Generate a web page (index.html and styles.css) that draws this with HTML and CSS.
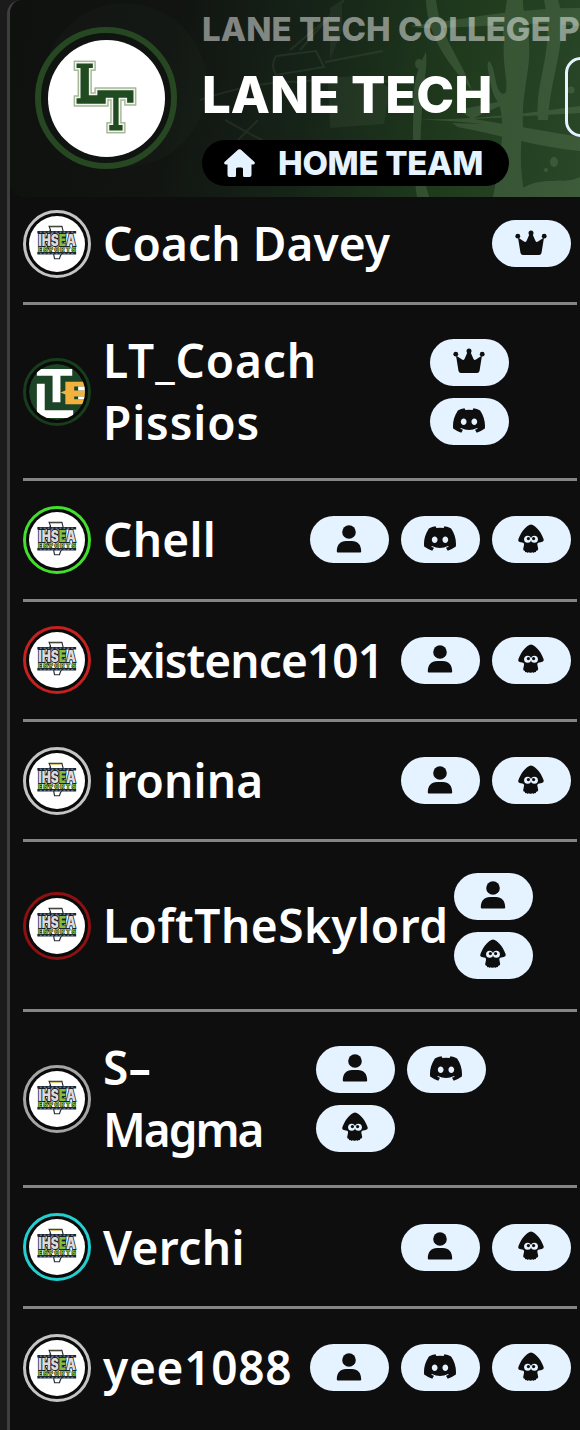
FILE: index.html
```html
<!DOCTYPE html>
<html lang="en">
<head>
<meta charset="utf-8">
<meta name="viewport" content="width=device-width">
<title>Lane Tech roster</title>
<link rel="stylesheet" href="styles.css">
</head>
<body>
<svg class="defs" aria-hidden="true">
  <symbol id="crown" viewBox="0 0 32 26"><path d="M5.500 23 3 7.500 9 11.500 Q10.500 12.500 11.500 11L15 3h2l3.500 8q1 1.500 2.500.5L29 7.500 26.500 23q-.5 2-2.500 2H8q-2 0-2.500-2z"/><circle cx="16" cy="3" r="2.500"/><circle cx="2.800" cy="6.200" r="2.400"/><circle cx="29.200" cy="6.200" r="2.400"/></symbol>
  <symbol id="user" viewBox="0 0 26 28"><circle cx="13" cy="7" r="6.800"/><path d="M.8 26.500C.8 19.500 4.500 16 10 16h6c5.500 0 9.200 3.500 9.200 10.500q0 1-1 1H1.800q-1 0-1-1z"/></symbol>
  <symbol id="discord" viewBox="0 0 127.140 96.360"><path d="M107.700 8.070A105.150 105.150 0 0 0 81.470 0a72.060 72.060 0 0 0-3.360 6.830 97.680 97.680 0 0 0-29.110 0A72.370 72.370 0 0 0 45.640 0a105.890 105.890 0 0 0-26.250 8.090C2.790 32.650-1.710 56.600.54 80.210a105.730 105.730 0 0 0 32.170 16.150 77.700 77.700 0 0 0 6.890-11.110 68.420 68.420 0 0 1-10.850-5.180c.91-.66 1.800-1.340 2.660-2a75.570 75.570 0 0 0 64.320 0c.87.71 1.760 1.390 2.660 2a68.680 68.680 0 0 1-10.870 5.190 77 77 0 0 0 6.890 11.100 105.250 105.250 0 0 0 32.190-16.140c2.640-27.380-4.510-51.110-18.900-72.150zM42.450 65.690C36.180 65.690 31 60 31 53s5-12.740 11.430-12.740S54 46 53.890 53s-5.050 12.690-11.440 12.690zm42.240 0C78.410 65.690 73.250 60 73.250 53s5-12.740 11.440-12.740S96.230 46 96.120 53s-5.040 12.690-11.430 12.690z"/></symbol>
  <symbol id="squid" viewBox="0 0 26 30"><path d="M13 .5C11 .8 7.500 3 5 6.500 2.500 10 .8 13.500.2 16q-.2 1.500 1.500 2l3.500.8q1.300.7.800 2.200L5.200 25q-.2 2 1.600 1.700.2 2.300 2 1.300.8 1.700 2 0 1.700 1.700 3.400 0 1.200 1.700 2 0 1.800 1 2-1.300 1.800.3 2-1.700l-.8-4q-.5-1.500.8-2.200l3.500-.8q2-.5 2.100-2C25.200 13.500 23.500 10 21 6.500 18.500 3 15 .8 13 .5z"/><g fill="#e5f2ff"><circle cx="9.600" cy="15.200" r="3.500"/><circle cx="16.400" cy="15.200" r="3.500"/></g><circle cx="10.400" cy="14.600" r="1.600"/><circle cx="15.600" cy="14.600" r="1.600"/></symbol>
  <symbol id="ihsea" viewBox="0 0 57 57">
    <path d="M20.500 10.500h13l1.500 6v19l-3 5-1 3h-5l-1-5-5-5-4-8 4-9 2-2z" fill="#fff" stroke="#242d35" stroke-width="1.200"/><path d="M21.500 11.500h11" stroke="#d4b953"/>
    <path d="M8.500 16.500h39.500M8.500 38h39.500" stroke="#18263a" stroke-width="2.600"/><path d="M11 16.500h35M11 38.500h35" stroke="#aab3bd" stroke-width=".8" stroke-dasharray="2 2"/>
    <text x="9.500" y="31" textLength="38" lengthAdjust="spacingAndGlyphs" class="badge-text">IHS<tspan class="badge-e">E</tspan>A</text>
    <text x="9.500" y="36.500" textLength="38" lengthAdjust="spacing" class="badge-sub">ESPORTS</text>
  </symbol>
</svg>
<main class="team">
  <header class="banner">
    <svg class="art" viewBox="0 0 570 197" preserveAspectRatio="none" aria-hidden="true">
      <g fill="#8bb183" opacity=".2">
        <path d="M497 0c-2 15-6 28-3 40-2 25 4 38 2 52-4 5-8-1-10-10-4-25-10-25-8-12 3 15 4 25 10 32 8 18 4 50-5 95h32c-4-20-6-45-2-70-2-35 8-55 6-85 0-20-7-30-6-42z"/>
        <path d="M400 26c50-6 105-18 170-18v18c-55-6-95 2-160 2zM370 116c65 9 140-2 200-10v7l-106 6 106 18v14c-42-4-80-16-122-24l-6-4 30 1c-30-4-70-4-102-8zM548 0c12 35-8 75-10 120h-10c-4-40 18-70 6-120z"/>
        <path d="M426 0c5 40 25 58 36 90-18-20-45-50-46-90zM416 52c-16 30-12 50-13 75 0 25 0 45 4 70h12c-10-35-9-60-7-85 0-25 6-42 4-60zM448 110l60-12-40 18-6 3zM500 197c30-26 50-10 70-20v20z"/>
        <ellipse cx="409" cy="64" rx="4" ry="5"/><ellipse cx="544" cy="162" rx="4" ry="5"/><circle cx="561" cy="90" r="3.500"/><circle cx="536" cy="170" r="2"/>
      </g>
      <g fill="none" stroke="#9ab393" opacity=".1" stroke-width="2">
        <path d="M266 56l40-5 8 16-48 8q-6-10 0-19zM280 50 325 12M290 50 334 0M315 62l58-11M190 100q60-20 100-18 50-8 90 0M215 120l40 22M248 120l-30 30"/>
        <path d="M318 82q32-14 62 6l-6 36-54 4zM320 8l12-8v30l-12 30z" fill="#7c9674" stroke="none"/>
      </g>
      <circle cx="115" cy="85" r="82" fill="#8aa588" opacity=".03"/>
    </svg>
    <div class="crest">
      <svg viewBox="0 0 118 118" role="img" aria-label="Lane Tech">
        <path id="lt" d="M28 23h18v6h-4v26h7v-5h38v14h-8v-5h-7v26h4v7H61v-7h4V59h-6v6H28v-7h4V29h-4z" fill="#204a20" stroke="#a4b796" stroke-width="4"/>
        <use href="#lt" class="crest-inner"/>
        <path d="M28 23h18v6h-4v26h7v-5h38v14h-8v-5h-7v26h4v7H61v-7h4V59h-6v6H28v-7h4V29h-4z" fill="#204a20" stroke="#f2f5ef" stroke-width="1.600"/>
      </svg>
    </div>
    <div class="titles">
      <div class="school">LANE TECH COLLEGE P</div>
      <h1 class="name-title">LANE TECH</h1>
      <div class="home"><svg viewBox="0 0 32 28" aria-hidden="true"><path d="M14.800.6Q16-.3 17.200.6L31 13q1 2-1 2.500h-2V26q0 2-2 2h-5q-1.500 0-1.500-1.500V20q0-1.500-1.500-1.500h-4q-1.500 0-1.500 1.500v6.500Q12.500 28 11 28H6q-2 0-2-2V15.500H2q-2-.5-1-2.500z"/></svg><span>HOME TEAM</span></div>
    </div>
    <div class="action"></div>
  </header>
  <ul class="roster">
    <li class="player first"><div class="avatar silver"><svg><use href="#ihsea"/></svg></div><span class="nick n-davey">Coach Davey</span><div class="tags"><b class="tag"><svg class="i-crown"><use href="#crown"/></svg></b></div></li>
    <li class="player tall"><div class="avatar forest"><svg viewBox="0 0 57 57"><circle cx="28.500" cy="28.500" r="28.500" fill="#1c4426"/><path d="M8 5h36v7H32v27h-8V12H8zM8 20h8v27h29v8H8z" fill="#fff"/><path d="M37 18h20v5H46v4h11v6H46v3h11v5H37V31l-5-2 5-2z" fill="#f2b23d"/><path d="M50 23h8v4h-8zM50 33h8v3h-8z" fill="#fff"/></svg></div><span class="nick n-lt">LT_Coach<br>Pissios</span><div class="tags t-lt"><b class="tag"><svg class="i-crown"><use href="#crown"/></svg></b><b class="tag"><svg class="i-discord"><use href="#discord"/></svg></b></div></li>
    <li class="player"><div class="avatar green"><svg><use href="#ihsea"/></svg></div><span class="nick n-chell">Chell</span><div class="tags"><b class="tag"><svg class="i-user"><use href="#user"/></svg></b><b class="tag"><svg class="i-discord"><use href="#discord"/></svg></b><b class="tag"><svg class="i-squid"><use href="#squid"/></svg></b></div></li>
    <li class="player"><div class="avatar red"><svg><use href="#ihsea"/></svg></div><span class="nick n-exist">Existence101</span><div class="tags"><b class="tag"><svg class="i-user"><use href="#user"/></svg></b><b class="tag"><svg class="i-squid"><use href="#squid"/></svg></b></div></li>
    <li class="player"><div class="avatar silver"><svg><use href="#ihsea"/></svg></div><span class="nick n-iron">ironina</span><div class="tags"><b class="tag"><svg class="i-user"><use href="#user"/></svg></b><b class="tag"><svg class="i-squid"><use href="#squid"/></svg></b></div></li>
    <li class="player loft"><div class="avatar maroon"><svg><use href="#ihsea"/></svg></div><span class="nick n-loft">LoftTheSkylord</span><div class="tags t-loft"><b class="tag"><svg class="i-user"><use href="#user"/></svg></b><b class="tag"><svg class="i-squid"><use href="#squid"/></svg></b></div></li>
    <li class="player tall"><div class="avatar gray"><svg><use href="#ihsea"/></svg></div><span class="nick n-magma">S<span class="dash">-</span><br>Magma</span><div class="tags t-magma"><b class="tag"><svg class="i-user"><use href="#user"/></svg></b><b class="tag"><svg class="i-discord"><use href="#discord"/></svg></b><b class="tag"><svg class="i-squid"><use href="#squid"/></svg></b></div></li>
    <li class="player"><div class="avatar cyan"><svg><use href="#ihsea"/></svg></div><span class="nick n-verchi">Verchi</span><div class="tags"><b class="tag"><svg class="i-user"><use href="#user"/></svg></b><b class="tag"><svg class="i-squid"><use href="#squid"/></svg></b></div></li>
    <li class="player last"><div class="avatar silver"><svg><use href="#ihsea"/></svg></div><span class="nick n-yee">yee1088</span><div class="tags"><b class="tag"><svg class="i-user"><use href="#user"/></svg></b><b class="tag"><svg class="i-discord"><use href="#discord"/></svg></b><b class="tag"><svg class="i-squid"><use href="#squid"/></svg></b></div></li>
  </ul>
</main>
</body>
</html>
```
FILE: styles.css
```css
* { box-sizing: border-box; }
html { overflow: hidden; background: #1b1b1b; }
body { margin: 0; height: 1430px; overflow: hidden; background: #1b1b1b; color: #fff; font-family: "Noto Sans", sans-serif; }
.defs { display: none; }
.team { margin-left: 7px; width: 573px; height: 1430px; overflow: hidden; border-left: 3px solid #3e3e3e; border-top-left-radius: 14px; background: #0e0e0e; }
.banner { position: relative; display: flex; height: 197px; overflow: hidden; border-radius: 14px 0 0 14px; background: linear-gradient(100deg, #0f110f 0%, #111411 28%, #162418 52%, #1f391d 75%, #2a4728 100%); }
.art { position: absolute; inset: 0; width: 570px; height: 197px; }
.crest { position: relative; flex: none; width: 142px; height: 142px; margin: 27px 0 0 25px; padding: 6.500px; border: 6px solid #264721; border-radius: 50%; background: #101410; }
.crest svg { display: block; width: 117px; height: 117px; border-radius: 50%; background: #fff; }
.crest-inner { stroke: #fff; }
.titles { position: relative; flex: none; width: 363px; margin-left: 25px; font-family: Inter, sans-serif; font-weight: 800; white-space: nowrap; }
.school { height: 56px; padding-top: 5px; font-size: 33px; line-height: 48px; letter-spacing: .05px; color: rgba(255,255,255,.47); }
.name-title { margin: 0; height: 84px; font-size: 51px; line-height: 77px; font-weight: 800; letter-spacing: -.1px; }
.home { display: flex; align-items: center; width: 307px; height: 46px; padding-left: 21px; gap: 22px; border-radius: 23px; background: #000; color: #e5f2ff; font-size: 33px; line-height: 46px; letter-spacing: -.3px; }
.home svg { width: 33px; height: 28px; fill: currentColor; }
.action { position: relative; flex: none; width: 120px; height: 80px; margin-top: 57px; border: 3px solid #e5f2ff; border-radius: 16px; }
.roster { margin: 0; padding: 0 3px 0 13px; list-style: none; }
.player { display: flex; align-items: center; height: 120.300px; padding-right: 6px; border-bottom: 3px solid #858585; }
.first { height: 108px; padding-bottom: 12px; }
.tall { height: 176.300px; }
.loft { height: 170px; }
.last { border: 0; height: 118px; }
.avatar { flex: none; width: 68px; height: 68px; padding: 3px; border: 3px solid; border-radius: 50%; background: #0a0a0a; }
.avatar svg { display: block; width: 56px; height: 56px; border-radius: 50%; background: #fff; }
.avatar.forest svg { background: none; }
.silver { border-color: #c4c4c4; }
.forest { border-color: #173d1d; }
.green { border-color: #42df2e; }
.red { border-color: #c4211f; }
.maroon { border-color: #8d1012; }
.gray { border-color: #a5a5a5; }
.cyan { border-color: #23cfd0; }
.badge-text { font: 900 16px Inter, sans-serif; fill: #d9dbde; stroke: #17202b; stroke-width: 2px; paint-order: stroke; }
.badge-e { fill: #84bd3a; }
.badge-sub { font: 900 6px Inter, sans-serif; fill: #82b63a; stroke: #26331f; stroke-width: 1px; paint-order: stroke; }
.nick { flex: none; margin-left: 12px; padding-bottom: 1px; font-size: 46px; line-height: 62px; font-weight: 600; white-space: nowrap; }
.n-davey { letter-spacing: .1px; }
.n-lt { letter-spacing: .9px; }
.n-chell { letter-spacing: .3px; }
.n-exist { letter-spacing: -.9px; }
.n-iron { letter-spacing: .2px; }
.n-loft { letter-spacing: .5px; }
.n-magma { letter-spacing: -2px; }
.n-verchi { letter-spacing: .4px; }
.n-yee { letter-spacing: .7px; }
.dash { display: inline-block; margin-left: 2px; transform: scaleX(1.6); transform-origin: left; }
.tags { display: flex; flex: none; flex-wrap: wrap; gap: 12px; margin-left: auto; }
.t-lt { width: 79px; margin-right: 62px; }
.t-loft { width: 79px; margin-right: 38px; }
.t-magma { width: 170px; margin-right: 85px; }
.tag { display: flex; align-items: center; justify-content: center; width: 79px; height: 47px; padding: 0 1px 2px 0; border-radius: 24px; background: #e5f2ff; color: #0e0e0e; }
.tag svg { fill: currentColor; }
.i-crown { width: 32px; height: 26px; }
.i-user { width: 26px; height: 28px; }
.i-discord { width: 32px; height: 25px; }
.i-squid { width: 26px; height: 30px; }
```
